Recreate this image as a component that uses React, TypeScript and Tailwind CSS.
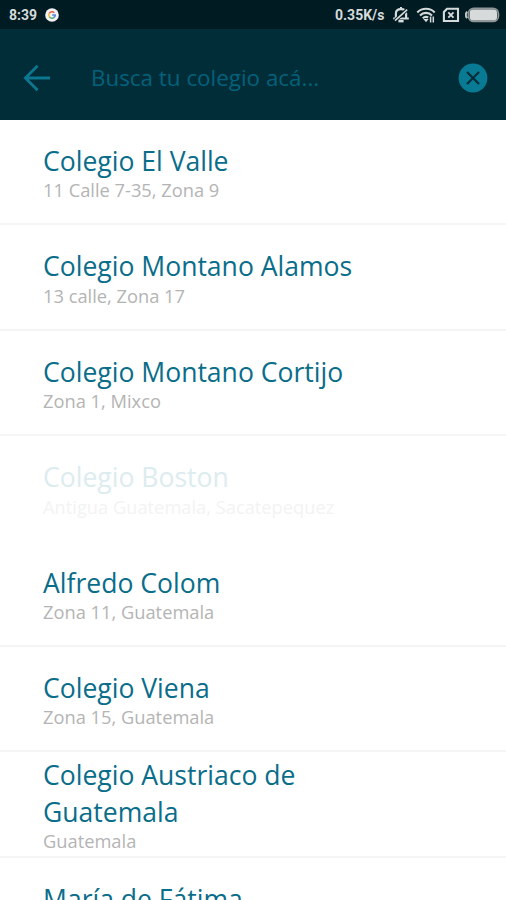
import clsx from 'clsx';

interface School {
  name: string;
  address: string;
  pressed?: boolean;
}

const schools: School[] = [
  { name: 'Colegio El Valle', address: '11 Calle 7-35, Zona 9' },
  { name: 'Colegio Montano Alamos', address: '13 calle, Zona 17' },
  { name: 'Colegio Montano Cortijo', address: 'Zona 1, Mixco' },
  { name: 'Colegio Boston', address: 'Antigua Guatemala, Sacatepequez', pressed: true },
  { name: 'Alfredo Colom', address: 'Zona 11, Guatemala' },
  { name: 'Colegio Viena', address: 'Zona 15, Guatemala' },
  { name: 'Colegio Austriaco de Guatemala', address: 'Guatemala' },
  { name: 'María de Fátima', address: 'Guatemala' },
];

const StatusBar = () => (
  <div className="h-[29px] shrink-0 bg-[#001b21] pl-[9px] pr-[6px] flex items-center justify-between text-[#d5dadb]">
    <div className="flex items-center">
      <span className="w-[28px] font-['Roboto',sans-serif] text-[14px] font-bold leading-none whitespace-nowrap">8:39</span>
      <svg className="ml-[8px]" width="14" height="14" viewBox="0 0 14 14" fill="none">
        <circle cx="7" cy="7" r="6.8" fill="#f1f3f3" />
        <path d="M4.2 5.4A3.2 3.2 0 0 1 9.3 4.7" stroke="#e2604f" strokeWidth="1.6" />
        <path d="M4.2 5.4A3.2 3.2 0 0 0 4.4 8.9" stroke="#efbd45" strokeWidth="1.6" />
        <path d="M4.4 8.9A3.2 3.2 0 0 0 9.1 9.4" stroke="#5cac6f" strokeWidth="1.6" />
        <path d="M9.1 9.4A3.2 3.2 0 0 0 10.2 7H7.2" stroke="#5488dd" strokeWidth="1.6" />
      </svg>
    </div>
    <div className="flex items-center">
      <span className="w-[50px] font-['Roboto',sans-serif] text-[14px] font-bold leading-none whitespace-nowrap">0.35K/s</span>
      <svg className="ml-[7px]" width="18" height="18" viewBox="0 0 18 18" fill="none" stroke="currentColor">
        <path d="M3.9 12.4V7.6C3.9 4.6 6 3.2 9 3.2s5.1 1.4 5.1 4.4v4.8" strokeWidth="2.2" />
        <path d="M1.2 12.6h15.6M9 1v2" strokeWidth="2" />
        <path d="M6.4 15.2h5.2" strokeWidth="2.4" />
        <path d="M2.6 15 15.6 3.2" stroke="#001b21" strokeWidth="3.6" />
        <path d="M3 14.6 15.2 3.6" strokeWidth="1.7" />
      </svg>
      <svg className="ml-[6px]" width="20" height="16" viewBox="0 0 20 16" fill="none" stroke="currentColor" strokeWidth="2.1">
        <path d="M1.3 5.4a12.3 12.3 0 0 1 17.4 0M4 8.4a8.5 8.5 0 0 1 12 0M6.8 11.3a4.5 4.5 0 0 1 5.4-.8" />
        <path d="m7.4 12 2.6 3.2 2.6-3.2z" fill="currentColor" stroke="none" />
        <path d="M14.6 9.6v5.8M17.3 9.6v5.8" strokeWidth="1.5" />
      </svg>
      <svg className="ml-[6px]" width="18" height="16" viewBox="0 0 18 16" fill="none" stroke="currentColor">
        <path d="M5 1.8h11V14H1.9V5z" strokeWidth="2.1" />
        <path d="m6.3 5.4 5.2 5.2m0-5.2-5.2 5.2" strokeWidth="1.9" />
      </svg>
      <svg className="ml-[5px]" width="35" height="16" viewBox="0 0 35 16" fill="none">
        <rect x="3.2" y="1.2" width="30.4" height="13.4" rx="5.6" fill="#4e595c" stroke="#909799" strokeWidth="1.4" />
        <rect x="4.8" y="2.4" width="27.2" height="11" rx="3.4" fill="#d7dada" />
        <path d="M2.2 4.6a5 5 0 0 0 0 6.6" stroke="#c0c5c6" strokeWidth="2" />
      </svg>
    </div>
  </div>
);

const SearchBar = () => (
  <div className="h-[91px] shrink-0 bg-[#002d37] pl-[23px] pr-[18px] pb-[1px] pt-[7px] flex items-center">
    <svg width="28" height="28" viewBox="0 0 28 28" fill="none" stroke="#0b7790" strokeWidth="2.8">
      <path d="M27 14H3M14.6 1.8 2.4 14l12.2 12.2" />
    </svg>
    <div className="ml-[40px] grow text-[22.4px] leading-[30px] text-[#04617b]">
      Busca tu colegio acá...
    </div>
    <svg width="30" height="30" viewBox="0 0 30 30" fill="none">
      <circle cx="15" cy="15" r="14.4" fill="#087a94" />
      <path d="m9 9 12 12M21 9 9 21" stroke="#002d37" strokeWidth="2.2" />
    </svg>
  </div>
);

const SchoolRow = ({ name, address, pressed }: School) => (
  <div
    className={clsx(
      'h-[105.4px] shrink-0 px-[43px] flex flex-col justify-center border-b-2',
      pressed ? 'border-transparent' : 'border-[#f5f5f5]',
    )}
  >
    <div className={clsx('max-w-[300px] text-[26.55px] leading-[36.5px]', name.length < 25 && 'whitespace-nowrap', pressed ? 'text-[#dcecef]' : 'text-[#0a6d8a]')}>
      {name}
    </div>
    <div className={clsx('text-[18.3px] leading-[21px] whitespace-nowrap', pressed ? 'text-[#f3f3f3]' : 'text-[#b4b4b4]')}>
      {address}
    </div>
  </div>
);

export default function App() {
  return (
    <div className="w-[506px] h-[900px] overflow-hidden flex flex-col bg-white font-['Open_Sans',sans-serif]">
      <StatusBar />
      <SearchBar />
      <div className="grow min-h-0 overflow-hidden flex flex-col">
        {schools.map((school) => (
          <SchoolRow key={school.name} {...school} />
        ))}
      </div>
    </div>
  );
}
